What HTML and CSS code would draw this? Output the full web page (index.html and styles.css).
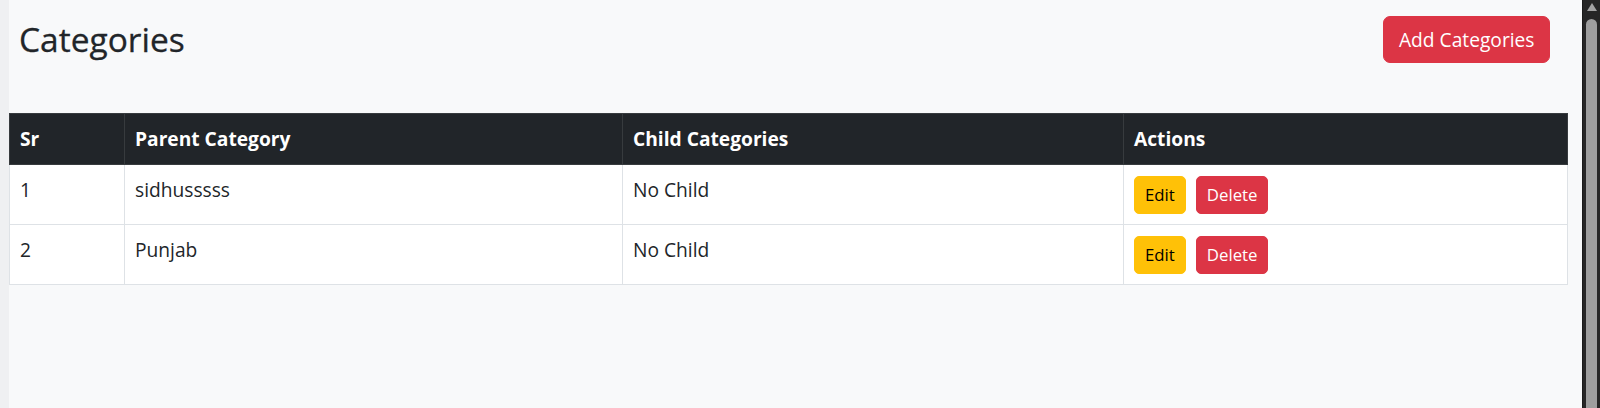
FILE: index.html
```html
<!DOCTYPE html>
<html lang="en">
<head>
<meta charset="utf-8">
<title>Categories</title>
<link rel="stylesheet" href="styles.css">
</head>
<body>
<div class="app">
  <div class="edge"></div>
  <main class="main">
    <div class="topbar">
      <h3 class="title">Categories</h3>
      <button class="btn btn-add">Add Categories</button>
    </div>
    <table class="cat-table">
      <colgroup>
        <col class="c-sr">
        <col class="c-parent">
        <col class="c-child">
        <col class="c-actions">
      </colgroup>
      <thead>
        <tr><th>Sr</th><th>Parent Category</th><th>Child Categories</th><th>Actions</th></tr>
      </thead>
      <tbody>
        <tr>
          <td>1</td><td>sidhusssss</td><td>No Child</td>
          <td class="actions"><div class="act-wrap"><button class="btn-sm btn-edit">Edit</button><button class="btn-sm btn-del">Delete</button></div></td>
        </tr>
        <tr>
          <td>2</td><td>Punjab</td><td>No Child</td>
          <td class="actions"><div class="act-wrap"><button class="btn-sm btn-edit">Edit</button><button class="btn-sm btn-del">Delete</button></div></td>
        </tr>
      </tbody>
    </table>
  </main>
  <div class="scrollbar">
    <div class="sb-arrow"></div>
    <div class="sb-thumb"></div>
  </div>
</div>
</body>
</html>
```
FILE: styles.css
```css
html, body {
  margin: 0;
  height: 100%;
}
body {
  background: #f8f9fa;
  color: #212529;
  font-family: "Open Sans", "Noto Sans", sans-serif;
  font-size: 19.2px;
  line-height: 30px;
  overflow: hidden;
}
.app {
  display: flex;
  height: 408px;
}
.edge {
  flex: none;
  width: 9px;
  background: #eff0f2;
}
.main {
  flex: 1;
  min-width: 0;
}
.topbar {
  display: flex;
  justify-content: space-between;
  align-items: flex-start;
  padding: 16px 32px 50px 10px;
}
.title {
  margin: 3px 0 0 0;
  font-size: 33.5px;
  font-weight: 500;
  line-height: 40px;
  color: #212529;
  -webkit-text-stroke: 0.3px #212529;
}
.btn {
  font-family: inherit;
  cursor: pointer;
}
.btn-add {
  height: 47px;
  box-sizing: border-box;
  padding: 0 14.5px;
  font-size: 19.2px;
  line-height: 45px;
  color: #fff;
  background: #dc3545;
  border: 1px solid #dc3545;
  border-radius: 7px;
}
.cat-table {
  width: 1558px;
  border-collapse: collapse;
  table-layout: fixed;
  margin-right: 15px;
}
.c-sr { width: 115px; }
.c-parent { width: 498px; }
.c-child { width: 501px; }
.c-actions { width: 444px; }
.cat-table th {
  background: #212529;
  color: #fff;
  font-weight: 700;
  text-align: left;
  padding: 10px;
  border: 1px solid #373b3e;
}
.cat-table td {
  background: #fff;
  padding: 10px;
  vertical-align: top;
  border: 1px solid #dee2e6;
}
.act-wrap {
  display: flex;
  gap: 10px;
  padding-top: 1px;
}
.btn-sm {
  height: 38px;
  box-sizing: border-box;
  padding: 0 10px;
  font-family: inherit;
  font-size: 16.8px;
  line-height: 36px;
  border-radius: 5px;
  cursor: pointer;
}
.btn-edit {
  background: #ffc107;
  border: 1px solid #ffc107;
  color: #000;
}
.btn-del {
  background: #dc3545;
  border: 1px solid #dc3545;
  color: #fff;
}
.scrollbar {
  flex: none;
  width: 18px;
  background: #262626;
  border-left: 1px solid #1a1a1a;
  box-sizing: border-box;
  display: flex;
  flex-direction: column;
  align-items: center;
}
.sb-arrow {
  margin-top: 3px;
  width: 0;
  height: 0;
  border-left: 5.5px solid transparent;
  border-right: 5.5px solid transparent;
  border-bottom: 8px solid #a3a3a3;
}
.sb-thumb {
  margin-top: 8px;
  flex: 1;
  width: 11px;
  background: #9e9e9e;
  border-radius: 6px 6px 0 0;
}
```
